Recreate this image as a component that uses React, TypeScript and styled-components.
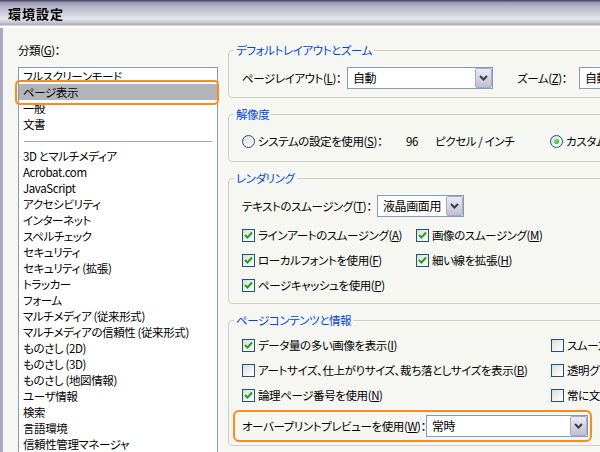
import React from "react";
import styled, { createGlobalStyle } from "styled-components";

const GlobalStyle = createGlobalStyle`
  html, body {
    margin: 0;
    padding: 0;
  }
  body {
    background: #f6f6f3;
    font-family: "Noto Sans CJK JP", "Noto Sans", sans-serif;
    font-size: 12px;
    color: #000;
  }
  u {
    text-underline-offset: 1px;
  }
`;

const Window = styled.div`
  width: 600px;
  height: 452px;
  overflow: hidden;
  display: flex;
  flex-direction: column;
  background: #f6f6f3;
  font-size: 11.5px;
  letter-spacing: -0.4px;
  font-feature-settings: "palt";
  white-space: nowrap;
`;

const TitleBar = styled.div`
  flex: none;
  height: 28px;
  box-sizing: border-box;
  display: flex;
  align-items: center;
  padding: 0 0 2px 8px;
  font-size: 13px;
  font-weight: 700;
  letter-spacing: 1px;
  background: linear-gradient(
    to bottom,
    #4f4f6d 0px,
    #4f4f6d 1px,
    #9494ac 2px,
    #b3b3c6 6px,
    #d3d3df 14px,
    #e6e6ee 19px,
    #c0c0d0 23px,
    #a9a9bd 25px,
    #ffffff 26px,
    #ffffff 28px
  );
`;

const Body = styled.div`
  flex: 1;
  min-height: 0;
  display: flex;
  gap: 10px;
  border-left: 3px solid #a9a9c1;
  overflow: hidden;
`;

const Sidebar = styled.div`
  flex: none;
  width: 200px;
  padding: 14px 0 0 15px;
  display: flex;
  flex-direction: column;
  gap: 9px;
`;

const Label = styled.div<{ $w?: number; $ml?: number }>`
  flex: none;
  line-height: 16px;
  width: ${(p) => (p.$w ? `${p.$w}px` : "auto")};
  margin-left: ${(p) => p.$ml ?? 0}px;
`;

const ListBox = styled.div`
  flex: none;
  height: 420px;
  box-sizing: border-box;
  border: 1px solid #7f9db9;
  background: #fff;
`;

const ListItem = styled.div<{ $selected?: boolean; $callout?: boolean }>`
  position: relative;
  height: 16px;
  line-height: 16px;
  padding-left: 4px;
  background: ${(p) => (p.$selected ? "#b3b3ba" : "transparent")};

  &::after {
    content: "";
    display: ${(p) => (p.$callout ? "block" : "none")};
    position: absolute;
    top: -4px;
    left: -4px;
    right: -2px;
    bottom: -5px;
    border: 2px solid #ff8a1c;
    border-radius: 5px;
    z-index: 1;
  }
`;

const ListSeparator = styled.div`
  height: 16px;
  box-sizing: border-box;
  padding-top: 9px;

  &::before {
    content: "";
    display: block;
    margin: 0 5px;
    border-top: 1px solid #a7a7a7;
  }
`;

const Main = styled.div`
  flex: none;
  width: 440px;
  padding-top: 14px;
  display: flex;
  flex-direction: column;
  gap: 8px;
`;

const Group = styled.fieldset`
  margin: 0;
  padding: 0;
  min-width: 0;
  border: 1px solid #d0d0c8;
  border-radius: 4px;
`;

const GroupTitle = styled.legend`
  margin-left: 5px;
  padding: 0 2px;
  height: 16px;
  line-height: 16px;
  color: #0046d5;
`;

const GroupBody = styled.div<{ $pt: number; $pb: number; $gap?: number }>`
  padding: ${(p) => p.$pt}px 0 ${(p) => p.$pb}px 13px;
  display: flex;
  flex-direction: column;
  align-items: flex-start;
  gap: ${(p) => p.$gap ?? 0}px;
`;

const Row = styled.div<{ $callout?: boolean }>`
  position: relative;
  display: flex;
  align-items: center;

  &::after {
    content: "";
    display: ${(p) => (p.$callout ? "block" : "none")};
    position: absolute;
    top: -5px;
    left: -9px;
    right: -4px;
    bottom: -5px;
    border: 2px solid #ff8a1c;
    border-radius: 6px;
  }
`;

const Cell = styled.div<{ $w: number }>`
  flex: none;
  width: ${(p) => p.$w}px;
  display: flex;
  align-items: center;
  line-height: 16px;
`;

const CheckGrid = styled.div<{ $cols: string }>`
  display: grid;
  grid-template-columns: ${(p) => p.$cols};
  row-gap: 9px;
`;

const CheckItem = styled.div`
  display: flex;
  align-items: center;
  gap: 3px;
  height: 16px;
  line-height: 16px;
`;

const Box = styled.span`
  flex: none;
  width: 13px;
  height: 13px;
  box-sizing: border-box;
  border: 1px solid #1c5180;
  background: linear-gradient(135deg, #dcdcd7 0%, #f3f3ef 60%, #ffffff 100%);
  display: flex;
  align-items: center;
  justify-content: center;
`;

const RadioCircle = styled.span<{ $on?: boolean }>`
  flex: none;
  width: 13px;
  height: 13px;
  box-sizing: border-box;
  border: 1px solid #1c5180;
  border-radius: 50%;
  background: linear-gradient(135deg, #dcdcd7 0%, #f3f3ef 60%, #ffffff 100%);
  display: flex;
  align-items: center;
  justify-content: center;
  margin-right: 3px;

  &::after {
    content: "";
    display: ${(p) => (p.$on ? "block" : "none")};
    width: 5px;
    height: 5px;
    border-radius: 50%;
    background: radial-gradient(circle at 35% 35%, #7fe37b, #21a121);
  }
`;

const SelectBox = styled.div<{ $w: number }>`
  flex: none;
  width: ${(p) => p.$w}px;
  height: 22px;
  box-sizing: border-box;
  border: 1px solid #7f9db9;
  background: #fff;
  display: flex;
  align-items: center;
`;

const SelectText = styled.span`
  flex: 1;
  min-width: 0;
  overflow: hidden;
  padding-left: 5px;
  line-height: 20px;
  font-size: 12px;
`;

const DropButton = styled.span`
  flex: none;
  width: 17px;
  height: 20px;
  box-sizing: border-box;
  border: 1px solid #a9a9c2;
  border-radius: 2px;
  background: linear-gradient(to bottom, #ebebf3, #bfbfd2);
  display: flex;
  align-items: center;
  justify-content: center;
`;

function Chevron() {
  return (
    <svg width="9" height="6" viewBox="0 0 9 6">
      <path d="M1 1 L4.5 4.5 L8 1" fill="none" stroke="#3a3a4a" strokeWidth="2" />
    </svg>
  );
}

function Select({ value, width }: { value: string; width: number }) {
  return (
    <SelectBox $w={width}>
      <SelectText>{value}</SelectText>
      <DropButton>
        <Chevron />
      </DropButton>
    </SelectBox>
  );
}

function Checkbox({ checked, children }: { checked?: boolean; children: React.ReactNode }) {
  return (
    <CheckItem>
      <Box>
        {checked && (
          <svg width="11" height="11" viewBox="0 0 11 11">
            <path d="M2 5 L4.5 7.5 L9 2.5" fill="none" stroke="#21a121" strokeWidth="2" />
          </svg>
        )}
      </Box>
      <span>{children}</span>
    </CheckItem>
  );
}

type Entry = { label: string; selected?: boolean } | "sep";

const categories: Entry[] = [
  { label: "フルスクリーンモード" },
  { label: "ページ表示", selected: true },
  { label: "一般" },
  { label: "文書" },
  "sep",
  { label: "3D とマルチメディア" },
  { label: "Acrobat.com" },
  { label: "JavaScript" },
  { label: "アクセシビリティ" },
  { label: "インターネット" },
  { label: "スペルチェック" },
  { label: "セキュリティ" },
  { label: "セキュリティ (拡張)" },
  { label: "トラッカー" },
  { label: "フォーム" },
  { label: "マルチメディア (従来形式)" },
  { label: "マルチメディアの信頼性 (従来形式)" },
  { label: "ものさし (2D)" },
  { label: "ものさし (3D)" },
  { label: "ものさし (地図情報)" },
  { label: "ユーザ情報" },
  { label: "検索" },
  { label: "言語環境" },
  { label: "信頼性管理マネージャ" },
];

export default function App() {
  return (
    <Window>
      <GlobalStyle />
      <TitleBar>環境設定</TitleBar>
      <Body>
        <Sidebar>
          <Label>
            分類(<u>G</u>)：
          </Label>
          <ListBox>
            {categories.map((c, i) =>
              c === "sep" ? (
                <ListSeparator key={i} />
              ) : (
                <ListItem key={i} $selected={c.selected} $callout={c.selected}>
                  {c.label}
                </ListItem>
              )
            )}
          </ListBox>
        </Sidebar>

        <Main>
          <Group>
            <GroupTitle>デフォルトレイアウトとズーム</GroupTitle>
            <GroupBody $pt={9} $pb={8}>
              <Row>
                <Label $w={105}>
                  ページレイアウト(<u>L</u>)：
                </Label>
                <Select value="自動" width={146} />
                <Label $w={62} $ml={24}>
                  ズーム(<u>Z</u>)：
                </Label>
                <Select value="自動" width={100} />
              </Row>
            </GroupBody>
          </Group>

          <Group>
            <GroupTitle>解像度</GroupTitle>
            <GroupBody $pt={11} $pb={12}>
              <Row>
                <Cell $w={164}>
                  <RadioCircle />
                  システムの設定を使用(<u>S</u>)：
                </Cell>
                <Cell $w={29}>96</Cell>
                <Cell $w={115}>ピクセル / インチ</Cell>
                <Cell $w={120}>
                  <RadioCircle $on />
                  カスタム解像度(<u>M</u>)：
                </Cell>
              </Row>
            </GroupBody>
          </Group>

          <Group>
            <GroupTitle>レンダリング</GroupTitle>
            <GroupBody $pt={9} $pb={10} $gap={10}>
              <Row>
                <Label $w={135}>
                  テキストのスムージング(<u>T</u>)：
                </Label>
                <Select value="液晶画面用" width={87} />
              </Row>
              <CheckGrid $cols="174px 200px">
                <Checkbox checked>
                  ラインアートのスムージング(<u>A</u>)
                </Checkbox>
                <Checkbox checked>
                  画像のスムージング(<u>M</u>)
                </Checkbox>
                <Checkbox checked>
                  ローカルフォントを使用(<u>F</u>)
                </Checkbox>
                <Checkbox checked>
                  細い線を拡張(<u>H</u>)
                </Checkbox>
                <Checkbox checked>
                  ページキャッシュを使用(<u>P</u>)
                </Checkbox>
              </CheckGrid>
            </GroupBody>
          </Group>

          <Group>
            <GroupTitle>ページコンテンツと情報</GroupTitle>
            <GroupBody $pt={9} $pb={8} $gap={12}>
              <CheckGrid $cols="309px 120px">
                <Checkbox checked>
                  データ量の多い画像を表示(<u>I</u>)
                </Checkbox>
                <Checkbox>
                  スムーズズームを使用(<u>Z</u>)
                </Checkbox>
                <Checkbox>
                  アートサイズ、仕上がりサイズ、裁ち落としサイズを表示(<u>B</u>)
                </Checkbox>
                <Checkbox>
                  透明グリッドを表示(<u>R</u>)
                </Checkbox>
                <Checkbox checked>
                  論理ページ番号を使用(<u>N</u>)
                </Checkbox>
                <Checkbox>
                  常に文書ページサイズを表示(<u>D</u>)
                </Checkbox>
              </CheckGrid>
              <Row $callout>
                <Label $w={184}>
                  オーバープリントプレビューを使用(<u>W</u>)：
                </Label>
                <Select value="常時" width={162} />
              </Row>
            </GroupBody>
          </Group>
        </Main>
      </Body>
    </Window>
  );
}
